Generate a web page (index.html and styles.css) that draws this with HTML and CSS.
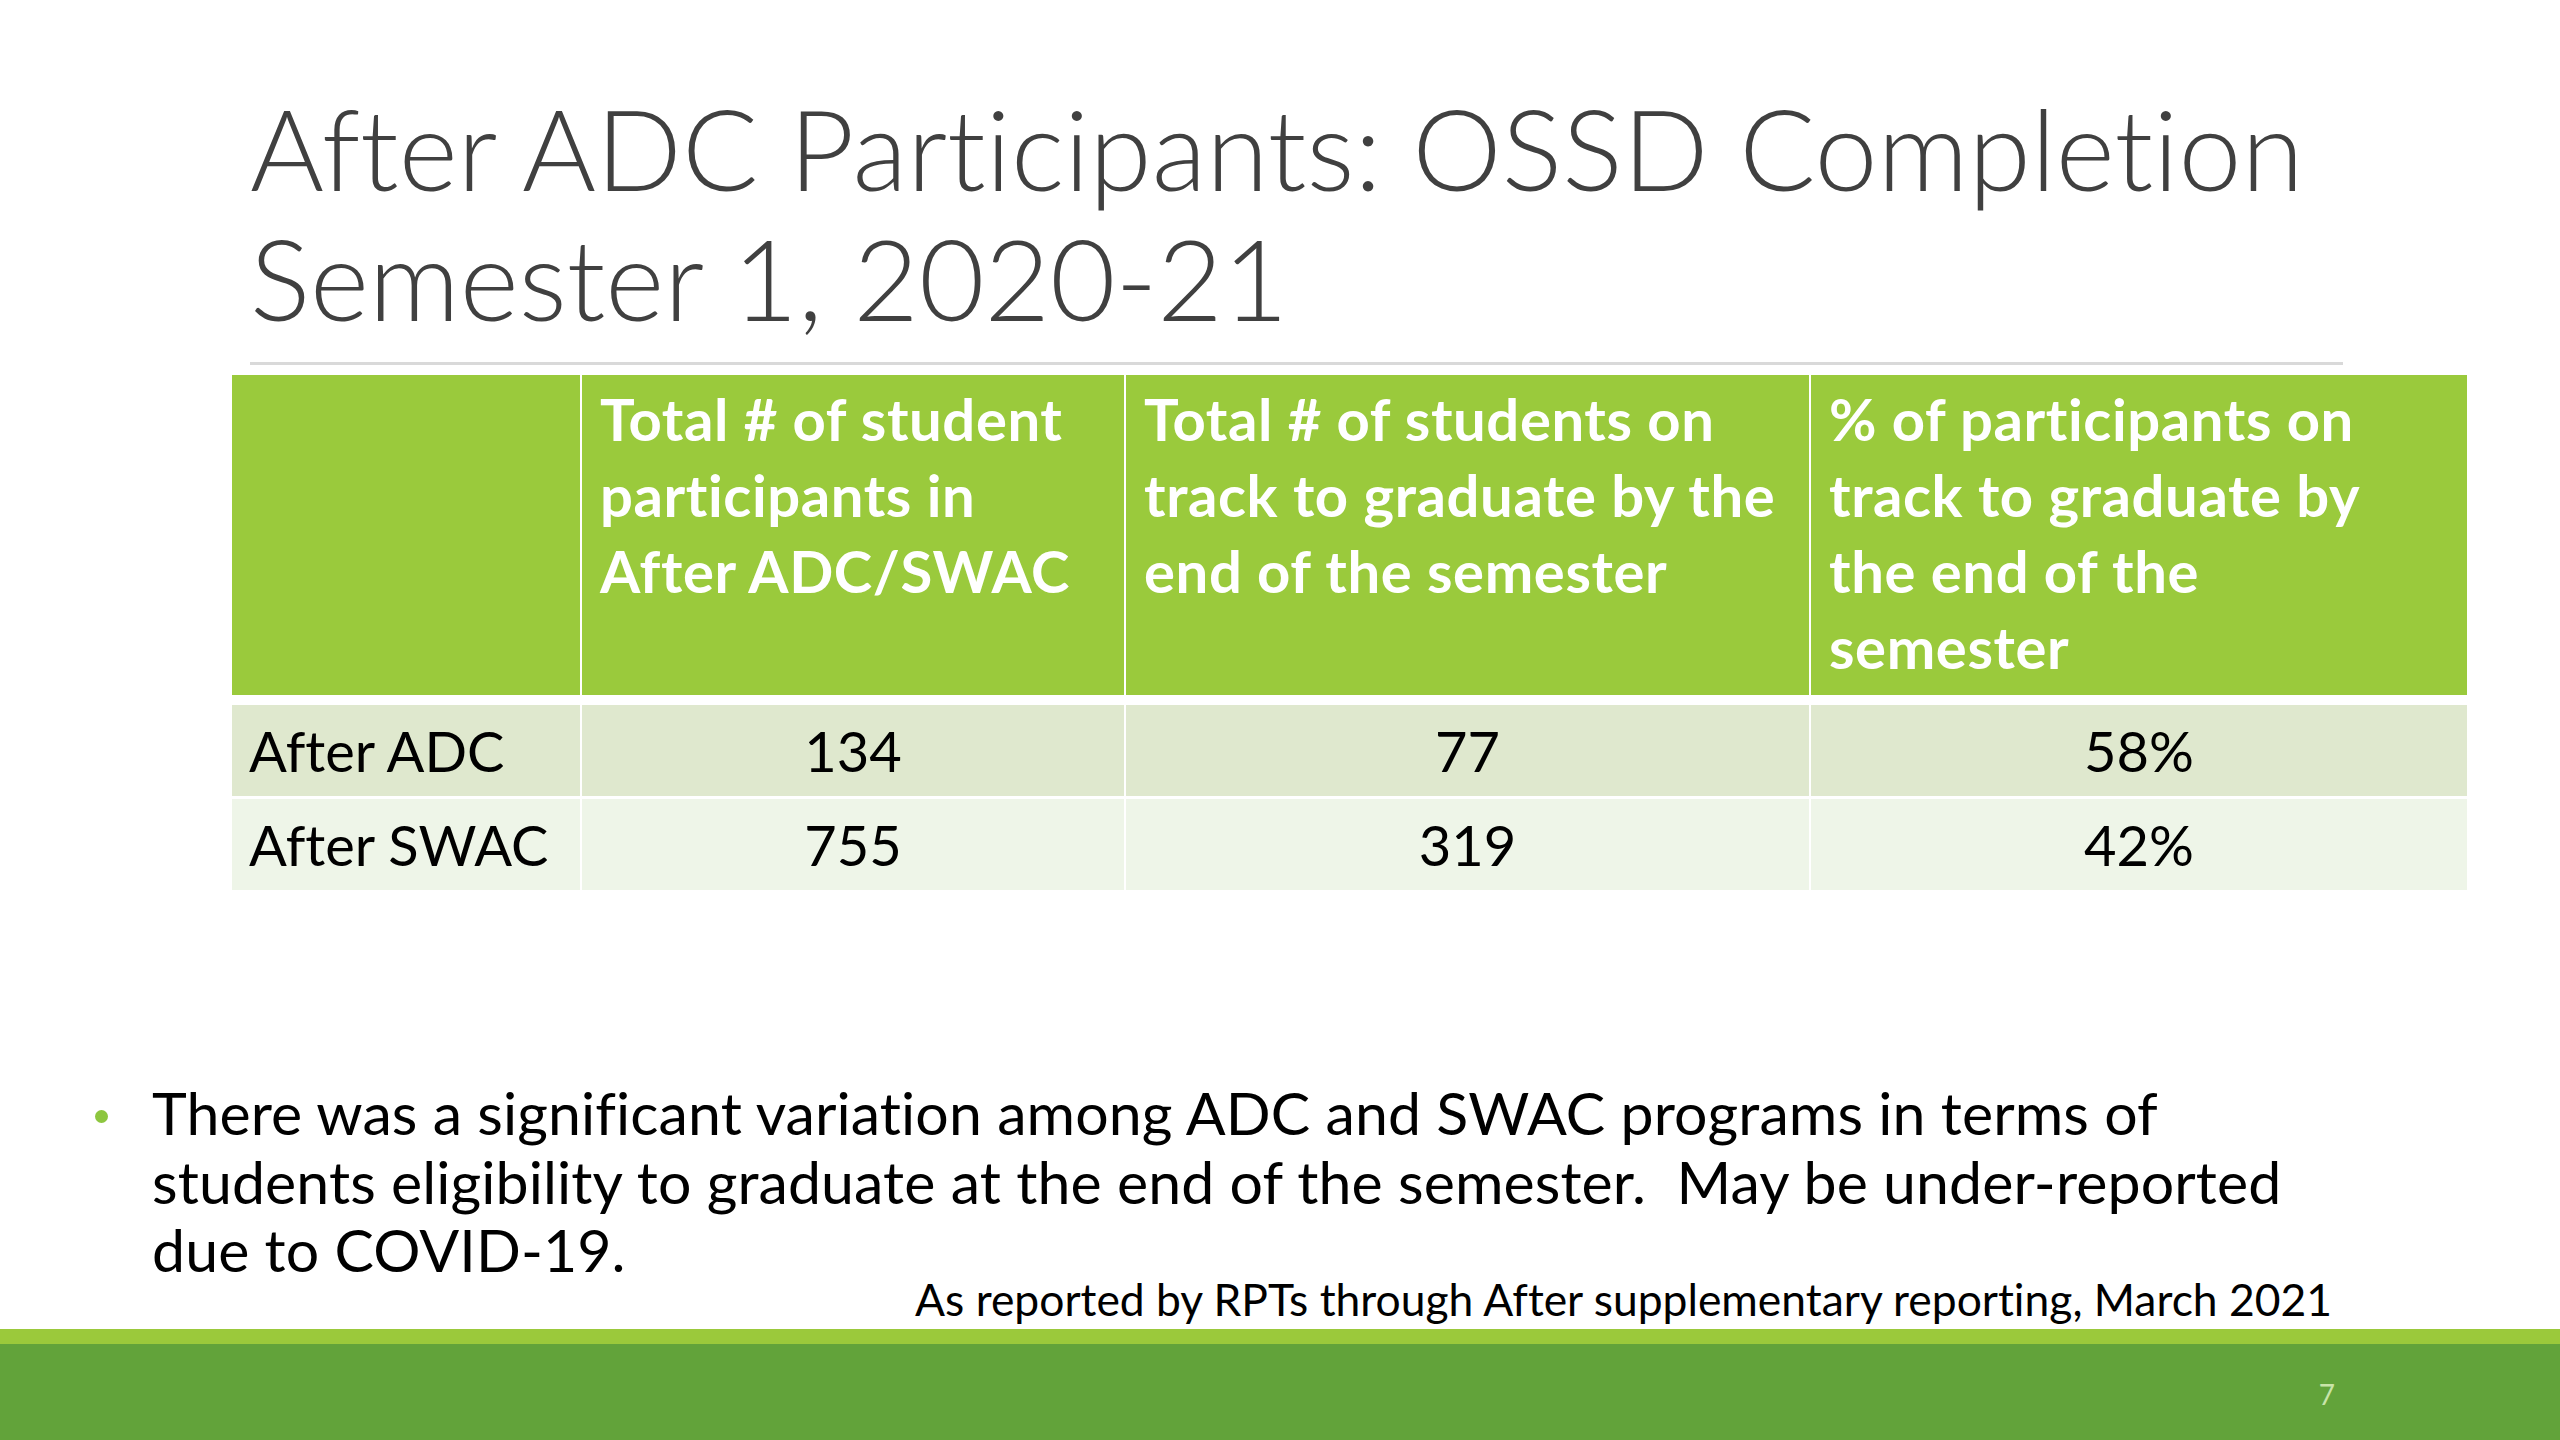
FILE: index.html
```html
<!DOCTYPE html>
<html lang="en">
<head>
<meta charset="utf-8">
<title>After ADC Participants: OSSD Completion</title>
<link rel="stylesheet" href="styles.css">
</head>
<body>
<div class="slide">
  <h1 class="title">After ADC Participants: OSSD Completion<br>Semester 1, 2020-21</h1>
  <div class="rule"></div>
  <div class="table">
    <div class="row head">
      <div class="cell"></div>
      <div class="cell">Total # of student<br>participants in<br>After ADC/SWAC</div>
      <div class="cell">Total # of students on<br>track to graduate by the<br>end of the semester</div>
      <div class="cell">% of participants on<br>track to graduate by<br>the end of the<br>semester</div>
    </div>
    <div class="row body odd">
      <div class="cell label">After ADC</div>
      <div class="cell num">134</div>
      <div class="cell num">77</div>
      <div class="cell num">58%</div>
    </div>
    <div class="row body even">
      <div class="cell label">After SWAC</div>
      <div class="cell num">755</div>
      <div class="cell num">319</div>
      <div class="cell num">42%</div>
    </div>
  </div>
  <div class="notes">
    <div class="bullet">
      <span class="dot"></span>
      <p class="bullet-text">There was a significant variation among ADC and SWAC programs in terms of<br>students eligibility to graduate at the end of the semester.&nbsp; May be under-reported<br>due to COVID-19.</p>
    </div>
    <p class="source">As reported by RPTs through After supplementary reporting, March 2021</p>
  </div>
  <div class="footer">
    <div class="footer-stripe"></div>
    <div class="footer-band"><span class="page-num">7</span></div>
  </div>
</div>
</body>
</html>
```

FILE: styles.css
```css
html, body {
  margin: 0;
  padding: 0;
  background: #ffffff;
}

.slide {
  width: 2560px;
  height: 1440px;
  display: flex;
  flex-direction: column;
  background: #ffffff;
  overflow: hidden;
  font-family: "Lato", "Open Sans", sans-serif;
  font-variant-ligatures: none;
  font-feature-settings: "liga" 0, "clig" 0;
}

.title {
  margin: 82px 0 0 250px;
  font-family: "Lato", sans-serif;
  font-weight: 300;
  font-size: 113px;
  line-height: 130px;
  color: #404040;
  white-space: nowrap;
}

.rule {
  margin: 20px 0 0 250px;
  width: 2093px;
  height: 3px;
  background: #d9d9d9;
}

.table {
  margin: 10px 0 0 232px;
  width: 2235px;
  display: flex;
  flex-direction: column;
}

.row {
  display: grid;
  grid-template-columns: 348px 542px 683px 656px;
  column-gap: 2px;
  background: #ffffff;
}

.row.head {
  height: 320px;
  margin-bottom: 10px;
}

.row.head .cell {
  background: #9aca3c;
  color: #ffffff;
  font-weight: 700;
  font-size: 58px;
  letter-spacing: 0.6px;
  line-height: 76px;
  padding: 6px 18px 0 18px;
  white-space: nowrap;
}

.row.body {
  height: 91px;
}

.row.body.odd {
  margin-bottom: 3px;
}

.row.body .cell {
  display: flex;
  align-items: center;
  font-size: 56px;
  line-height: 64px;
  color: #000000;
  white-space: nowrap;
}

.row.odd .cell {
  background: #dfe8ce;
}

.row.even .cell {
  background: #eef5e8;
}

.cell.label {
  padding-left: 17px;
}

.cell.num {
  justify-content: center;
}

.notes {
  margin-top: 189px;
  height: 250px;
  display: grid;
  grid-template-columns: 1fr;
  grid-template-rows: 1fr;
}

.bullet {
  grid-area: 1 / 1;
  align-self: start;
  display: flex;
  align-items: flex-start;
  padding-left: 95px;
}

.dot {
  flex: none;
  width: 13px;
  height: 13px;
  border-radius: 50%;
  background: #8dc63f;
  margin-top: 31px;
  margin-right: 44px;
}

.bullet-text {
  margin: 0;
  font-size: 59px;
  letter-spacing: 0.1px;
  line-height: 68.5px;
  color: #000000;
  white-space: nowrap;
}

.source {
  grid-area: 1 / 1;
  align-self: end;
  justify-self: end;
  margin: 0 228px 5px 0;
  font-size: 44.4px;
  line-height: 50px;
  color: #000000;
  white-space: nowrap;
}

.footer {
  flex: 1;
  display: flex;
  flex-direction: column;
}

.footer-stripe {
  height: 15px;
  background: #9bc93b;
}

.footer-band {
  flex: 1;
  background: #62a33a;
  display: flex;
  justify-content: flex-end;
  align-items: flex-start;
  padding: 36px 225px 0 0;
}

.page-num {
  font-size: 28px;
  line-height: 28px;
  color: #c8e4a8;
}
```
